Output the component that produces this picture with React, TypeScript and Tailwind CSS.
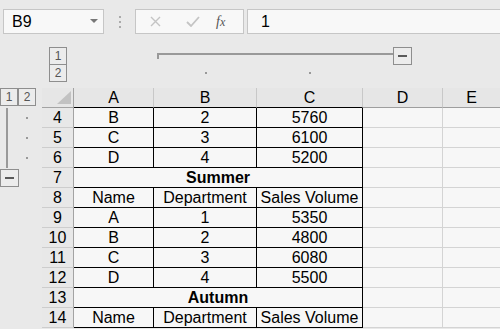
import React from 'react';

const cols = [
  { key: 'A', w: 'w-[80px]' },
  { key: 'B', w: 'w-[103px]' },
  { key: 'C', w: 'w-[106px]' },
  { key: 'D', w: 'w-[80px]' },
  { key: 'E', w: 'flex-1' },
];

type RowData = { n: number; cells?: string[]; merged?: string };

const rows: RowData[] = [
  { n: 4, cells: ['B', '2', '5760'] },
  { n: 5, cells: ['C', '3', '6100'] },
  { n: 6, cells: ['D', '4', '5200'] },
  { n: 7, merged: 'Summer' },
  { n: 8, cells: ['Name', 'Department', 'Sales Volume'] },
  { n: 9, cells: ['A', '1', '5350'] },
  { n: 10, cells: ['B', '2', '4800'] },
  { n: 11, cells: ['C', '3', '6080'] },
  { n: 12, cells: ['D', '4', '5500'] },
  { n: 13, merged: 'Autumn' },
  { n: 14, cells: ['Name', 'Department', 'Sales Volume'] },
];

function LevelButton({ label }: { label: string }) {
  return (
    <div className="w-[18px] h-[18px] border border-[#8e8e8e] bg-[#ececec] flex items-center justify-center text-[12px] text-[#555] leading-none">
      {label}
    </div>
  );
}

function MinusButton() {
  return (
    <div className="w-[19px] h-[18px] border border-[#8e8e8e] bg-[#ececec] flex items-center justify-center">
      <div className="w-[9px] h-[2px] bg-[#5a5a5a]" />
    </div>
  );
}

// outline gutter on the left of the row numbers
function Gutter({ n }: { n: number }) {
  if (n >= 4 && n <= 6) {
    return (
      <div className="w-[42px] h-full flex items-center">
        <div className="ml-[6px] w-[2px] h-full bg-[#999]" />
        <div className="ml-[18px] w-[2px] h-[2px] bg-[#999]" />
      </div>
    );
  }
  if (n === 7) {
    return (
      <div className="w-[42px] h-full flex items-center">
        <MinusButton />
      </div>
    );
  }
  return <div className="w-[42px] h-full" />;
}

function SheetRow({ row }: { row: RowData }) {
  return (
    <div className="flex h-[20px]">
      <Gutter n={row.n} />
      <div className="w-[32px] h-full bg-[#e8e8e8] border-r border-b border-r-[#a3a3a3] border-b-[#cdcdcd] flex items-center justify-center">
        {row.n}
      </div>
      {row.merged ? (
        <div className="w-[289px] h-full bg-[#f7f7f7] border-r border-b border-black flex items-center justify-center font-bold">
          {row.merged}
        </div>
      ) : (
        row.cells!.map((c, i) => (
          <div
            key={i}
            className={`${cols[i].w} h-full bg-[#f7f7f7] border-r border-b border-black flex items-center justify-center whitespace-nowrap overflow-hidden`}
          >
            {c}
          </div>
        ))
      )}
      <div className="w-[80px] h-full bg-[#f7f7f7] border-r border-b border-[#d4d4d4]" />
      <div className="flex-1 h-full bg-[#f7f7f7] border-b border-[#d4d4d4]" />
    </div>
  );
}

export default function App() {
  return (
    <div className="w-[500px] h-[329px] overflow-hidden bg-[#e9e9e9] text-[16px] text-black font-['Liberation_Sans',Arial,sans-serif]">
      {/* formula bar */}
      <div className="h-[40px] flex items-center pt-[3px]">
        <div className="ml-[3px] w-[101px] h-[25px] border border-[#c6c6c6] bg-[#f8f8f8] flex items-center pl-[8px] pr-[5px]">
          <span className="flex-1">B9</span>
          <svg width="8" height="5" viewBox="0 0 8 5">
            <path d="M0 0 L8 0 L4 4 Z" fill="#777" />
          </svg>
        </div>
        <div className="w-[31px] flex flex-col items-center gap-[3px]">
          <div className="w-[2px] h-[2px] bg-[#aaa]" />
          <div className="w-[2px] h-[2px] bg-[#aaa]" />
          <div className="w-[2px] h-[2px] bg-[#aaa]" />
        </div>
        <div className="w-[109px] h-[25px] border border-[#c6c6c6] bg-[#f8f8f8] flex items-center">
          <svg className="ml-[14px]" width="11" height="11" viewBox="0 0 11 11">
            <path d="M1 1 L10 10 M10 1 L1 10" stroke="#c4c4c4" strokeWidth="1.4" />
          </svg>
          <svg className="ml-[25px]" width="14" height="11" viewBox="0 0 14 11">
            <path d="M1 6 L5 10 L13 1" stroke="#c4c4c4" strokeWidth="1.8" fill="none" />
          </svg>
          <span className="ml-[16px] font-['Liberation_Serif',serif] italic text-[14px] text-[#555]">
            f<span className="text-[12px]">x</span>
          </span>
        </div>
        <div className="ml-[3px] flex-1 h-[25px] border-y border-l border-[#c6c6c6] bg-[#f8f8f8] flex items-center pl-[13px]">
          1
        </div>
      </div>

      {/* column outline band */}
      <div className="flex h-[48px]">
        <div className="w-[42px]" />
        <div className="w-[32px] pt-[7px] pl-[7px] flex flex-col">
          <LevelButton label="1" />
          <div className="-mt-px">
            <LevelButton label="2" />
          </div>
        </div>
        <div className="flex-1 flex flex-col">
          <div className="flex items-start pt-[7px] h-[25px]">
            <div className="w-[83px]" />
            <div className="mt-[6px] w-[236px] h-[6px] border-t-2 border-l-2 border-[#999]" />
            <MinusButton />
          </div>
          <div className="flex">
            <div className="w-[80px]" />
            <div className="w-[103px] flex justify-center">
              <div className="mt-[7px] w-[2px] h-[2px] bg-[#999]" />
            </div>
            <div className="w-[106px] flex justify-center">
              <div className="mt-[7px] w-[2px] h-[2px] bg-[#999]" />
            </div>
          </div>
        </div>
      </div>

      {/* column header */}
      <div className="flex h-[20px]">
        <div className="w-[42px] flex items-start">
          <LevelButton label="1" />
          <LevelButton label="2" />
        </div>
        <div className="w-[32px] h-full bg-[#e6e6e6] border-r border-b border-[#a3a3a3] flex items-end justify-end pr-[2px] pb-[3px]">
          <svg width="14" height="13" viewBox="0 0 14 13">
            <path d="M14 0 L14 13 L0 13 Z" fill="#c2c2c2" />
          </svg>
        </div>
        {cols.map((c, i) => (
          <div
            key={c.key}
            className={`${c.w} h-full bg-[#e6e6e6] border-b flex items-center justify-center ${
              i < 3 ? 'border-b-black' : 'border-b-[#9e9e9e]'
            } ${i < 4 ? 'border-r border-r-[#c8c8c8]' : ''}`}
          >
            {c.key}
          </div>
        ))}
      </div>

      {rows.map((r) => (
        <SheetRow key={r.n} row={r} />
      ))}
    </div>
  );
}
